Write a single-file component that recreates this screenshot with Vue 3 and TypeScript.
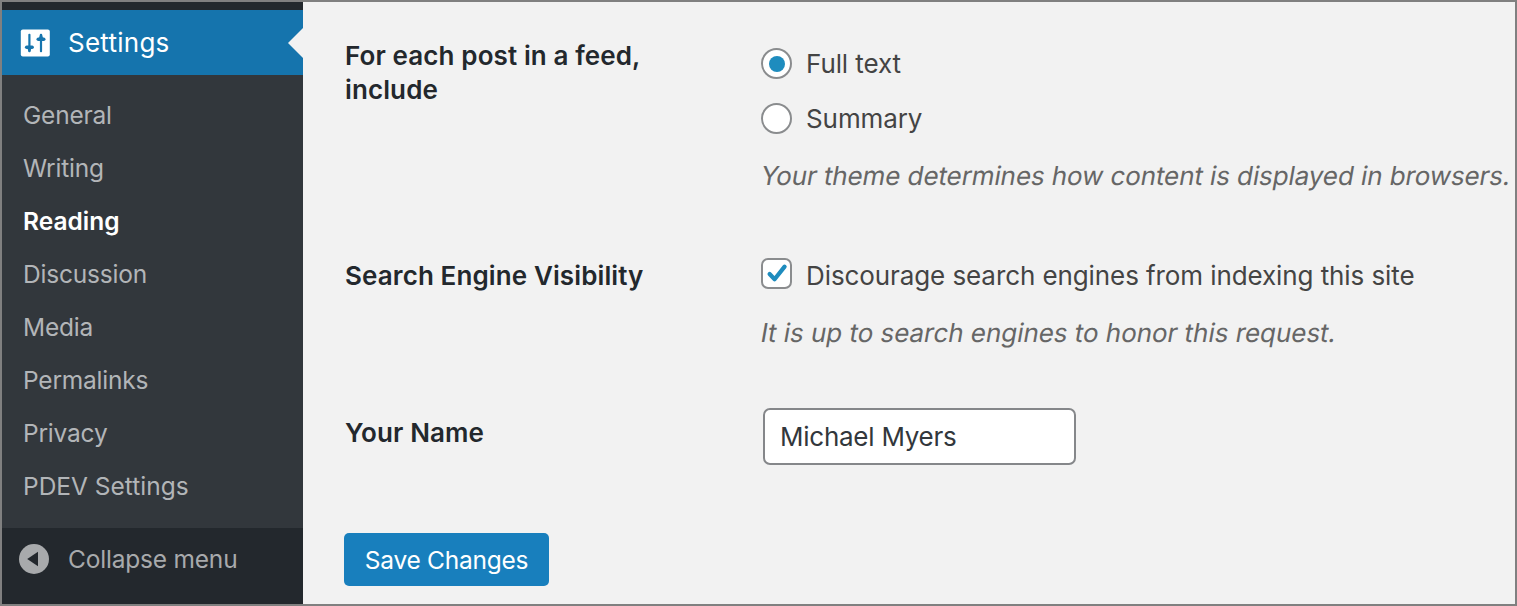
<script setup lang="ts">
interface MenuItem { label: string; current?: boolean }
const items: MenuItem[] = [
  { label: 'General' },
  { label: 'Writing' },
  { label: 'Reading', current: true },
  { label: 'Discussion' },
  { label: 'Media' },
  { label: 'Permalinks' },
  { label: 'Privacy' },
  { label: 'PDEV Settings' },
]
</script>

<template>
  <div class="screen">
    <aside class="sidebar">
      <div class="top-item">
        <svg width="30" height="28" viewBox="0 0 30 28">
          <rect x="0.8" y="0.5" width="29" height="27" rx="2" fill="#fff" />
          <g fill="#1675ae">
            <rect x="8.3" y="4.8" width="2.2" height="18.4" rx="1" />
            <rect x="4.9" y="16.4" width="9" height="3.6" rx="1.8" />
            <path d="M7.4 19h4l-1 3.6h-2z" />
            <rect x="19.9" y="4.8" width="2.2" height="18.4" rx="1" />
            <rect x="16.5" y="8.4" width="9" height="3.6" rx="1.8" />
            <path d="M19 9h4l-1-3.6h-2z" />
          </g>
        </svg>
        <span>Settings</span>
        <i class="notch"></i>
      </div>
      <nav>
        <a v-for="i in items" :key="i.label" :class="{ current: i.current }">{{ i.label }}</a>
      </nav>
      <div class="collapse">
        <svg width="30" height="30" viewBox="0 0 30 30"><circle cx="15" cy="15" r="15" fill="#a8aaac" /><path d="M19 7.8v14.4L8.2 15z" fill="#23282d" /></svg>
        <span>Collapse menu</span>
      </div>
    </aside>
    <main>
      <div class="row feed">
        <h3>For each post in a feed,<br />include</h3>
        <div class="field">
          <label><i class="radio on"></i><span>Full text</span></label>
          <label><i class="radio"></i><span>Summary</span></label>
          <p>Your theme determines how content is displayed in browsers.</p>
        </div>
      </div>
      <div class="row visibility">
        <h3>Search Engine Visibility</h3>
        <div class="field">
          <label><i class="check"><svg width="31" height="31" viewBox="0 0 31 31"><path d="M8.6 16l5 5.2L23.6 8.6" stroke="#1e8cbe" stroke-width="4.2" stroke-linecap="round" stroke-linejoin="round" fill="none" /></svg></i><span>Discourage search engines from indexing this site</span></label>
          <p>It is up to search engines to honor this request.</p>
        </div>
      </div>
      <div class="row name">
        <h3>Your Name</h3>
        <div class="field"><input type="text" value="Michael Myers" /></div>
      </div>
      <button>Save Changes</button>
    </main>
  </div>
</template>

<style scoped>
.screen { box-sizing: border-box; width: 1517px; height: 606px; border: 2px solid #808080; background: #f2f2f2; display: flex; overflow: hidden; font-family: Inter, "Liberation Sans", sans-serif; font-size: 26px; letter-spacing: -0.09px; color: #444; white-space: nowrap; }
.sidebar { width: 301px; flex: none; background: #32373c; display: flex; flex-direction: column; color: #b2b5b8; font-size: 24.5px; letter-spacing: -0.2px; }
.top-item { position: relative; margin-top: 8px; height: 65px; background: #1574ad; color: #fff; display: flex; align-items: center; padding-left: 18px; gap: 18px; box-shadow: 0 -9px #23282d; font-size: 26px; letter-spacing: 0.25px; }
.notch { position: absolute; right: 0; top: 18px; border: 15px solid transparent; border-left: 0; border-right-color: #f2f2f2; }
nav { padding: 14px 0 0 21px; display: flex; flex-direction: column; }
nav a { height: 53px; line-height: 53px; }
nav .current { color: #fff; font-weight: 600; letter-spacing: 0; }
nav a:last-child { letter-spacing: 0; }
.collapse { margin-top: auto; height: 76px; background: #23282d; display: flex; box-sizing: border-box; padding: 16px 0 0 17px; gap: 19px; line-height: 30px; color: #a8aaac; }
main { padding-left: 42px; }
.row { display: flex; box-sizing: border-box; }
h3 { margin: 0; width: 416px; font-size: 26px; line-height: 34px; font-weight: 600; color: #23282d; letter-spacing: 0.11px; }
label { display: flex; align-items: center; gap: 14px; height: 55px; }
p { margin: 13px 0 0; color: #666; line-height: 34px; transform: skewX(-10deg); letter-spacing: -0.1px; }
.radio, .check { box-sizing: border-box; width: 31px; height: 31px; border: 2px solid #8a8c8e; background: #fff; border-radius: 50%; display: flex; align-items: center; justify-content: center; flex: none; }
.check { border-radius: 7px; margin-top: -3px; }
.check svg { flex: none; }
.on::after { content: ""; width: 16px; height: 16px; border-radius: 50%; background: #1e8cbe; }
.feed { padding-top: 37px; height: 257px; }
.feed .field { margin-top: -3px; }
.visibility { height: 157px; }
.visibility label { height: 34px; margin-top: -1px; }
.visibility p { margin-top: 24px; letter-spacing: -0.04px; }
.name { height: 117px; }
.name .field { margin: -8px 0 0 2px; }
button { display: block; margin-left: -1px; padding: 0; border: 0; background: #187fbd; color: #fff; font: inherit; font-size: 24.5px; letter-spacing: -0.25px; width: 205px; height: 53px; border-radius: 5px; }
input { display: block; box-sizing: border-box; width: 313px; height: 57px; border: 2px solid #85878a; border-radius: 7px; background: #fff; padding: 0 0 0 15px; font: inherit; letter-spacing: -0.25px; color: #32373c; }
</style>
